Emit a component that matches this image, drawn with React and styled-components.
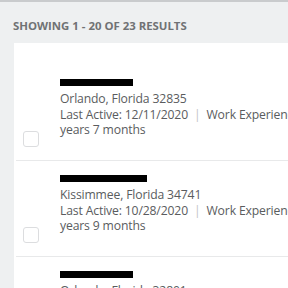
import styled, { createGlobalStyle } from 'styled-components';

const GlobalStyle = createGlobalStyle`
  html, body {
    margin: 0;
    padding: 0;
    background: #eef0f1;
    font-family: "Open Sans", "Liberation Sans", sans-serif;
    overflow: hidden;
  }
`;

const results = [
  { bar: 73, place: 'Orlando, Florida 32835', active: '12/11/2020', rest: 'years 7 months' },
  { bar: 87, place: 'Kissimmee, Florida 34741', active: '10/28/2020', rest: 'years 9 months' },
  { bar: 73, place: 'Orlando, Florida 32801', active: '11/02/2020', rest: 'years 2 months' },
];

function App() {
  return (
    <>
      <GlobalStyle />
      <Page>
        <Count>Showing 1 - 20 of 23 results</Count>
        <Card>
          {results.map((r, index) => (
            <Row key={index} first={index === 0}>
              <CheckCol>
                <Check />
              </CheckCol>
              <Info>
                <Redacted style={{ width: r.bar }} />
                <Line>{r.place}</Line>
                <Line>
                  Last Active: {r.active}
                  <Pipe>|</Pipe>
                  Work Experience: 2
                </Line>
                <Line>{r.rest}</Line>
              </Info>
            </Row>
          ))}
        </Card>
      </Page>
    </>
  );
}

const Page = styled.div`
  width: 288px;
  height: 288px;
  border-top: 2px solid #c9cbcd;
  box-sizing: border-box;
  overflow: hidden;
`;

const Count = styled.div`
  padding: 16px 0 0 13px;
  height: 25px;
  font-size: 11.4px;
  font-weight: 700;
  text-transform: uppercase;
  color: #707274;
`;

const Card = styled.div`
  margin-left: 14px;
  width: 320px;
  background: #fff;
  padding-top: 21px;
`;

const Row = styled.div`
  display: flex;
  margin-left: 2px;
  padding: ${(p) => (p.first ? '15px' : '14px')} 0 13px 0;
  border-bottom: 1px solid #e8e9ea;
  white-space: nowrap;
`;

const CheckCol = styled.div`
  width: 44px;
  flex-shrink: 0;
  padding-left: 7px;
  box-sizing: border-box;
`;

const Check = styled.div`
  margin-top: 52px;
  width: 16px;
  height: 16px;
  border: 1px solid #dcdddf;
  border-radius: 3px;
  box-sizing: border-box;
`;

const Info = styled.div`
  display: flex;
  flex-direction: column;
  font-size: 12.2px;
  letter-spacing: -0.15px;
  line-height: 15.5px;
  color: #5a5c5e;
`;

const Redacted = styled.div`
  height: 7px;
  background: #000;
  margin-bottom: 5px;
`;

const Line = styled.div``;

const Pipe = styled.span`
  color: #c2c4c6;
  margin: 0 6px;
`;

export default App;
